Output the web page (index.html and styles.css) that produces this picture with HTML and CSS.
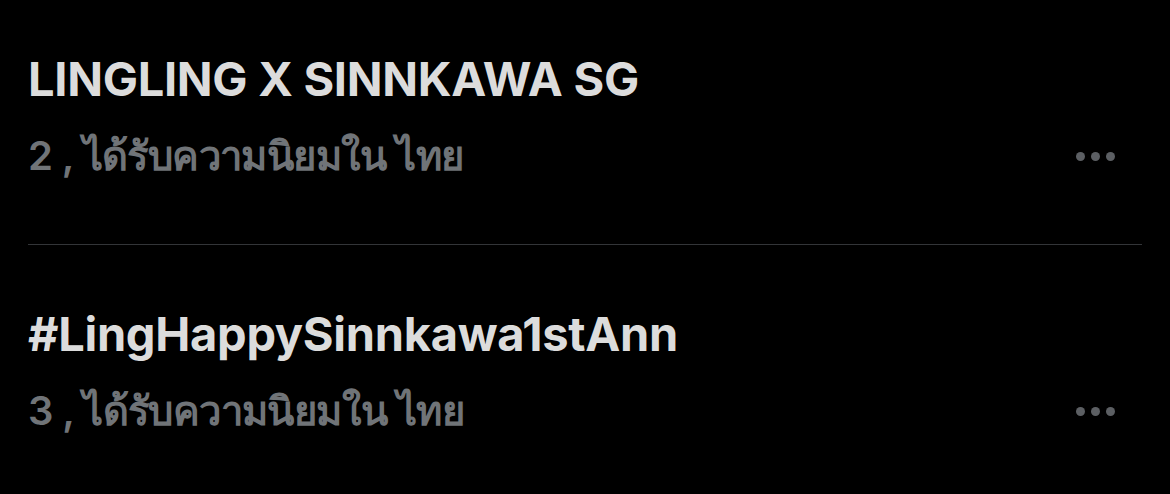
FILE: index.html
```html
<!DOCTYPE html>
<html lang="th">
<head>
    <meta charset="UTF-8">
    <meta name="viewport" content="width=device-width, initial-scale=1.0">
    <title>Trends</title>
    <link rel="stylesheet" href="styles.css">
</head>
<body>

    <!-- Trending list -->
    <div class="trend-list">
        <div class="trend">
            <div class="trend-name">LINGLING X SINNKAWA SG</div>
            <div class="trend-meta">
                <span>2 , ได้รับความนิยมใน ไทย</span>
                <div class="more"><span></span><span></span><span></span></div>
            </div>
        </div>
        <div class="divider"></div>
        <div class="trend">
            <div class="trend-name">#LingHappySinnkawa1stAnn</div>
            <div class="trend-meta">
                <span>3 , ได้รับความนิยมใน ไทย</span>
                <div class="more"><span></span><span></span><span></span></div>
            </div>
        </div>
    </div>

</body>
</html>
```

FILE: styles.css
```css
body {
    margin: 0;
    background-color: #000;
    font-family: Inter, "Noto Sans", sans-serif;
    color: #e7e9ea;
    width: 1170px;
    height: 494px;
    overflow: hidden;
}

.trend-list {
    padding: 51px 28px 0 28px;
}

.trend-name {
    font-size: 47px;
    font-weight: 700;
    line-height: 56px;
    color: #dcdcdc;
    letter-spacing: -0.3px;
}

.trend-meta {
    display: flex;
    align-items: center;
    justify-content: space-between;
    font-size: 40px;
    font-weight: 600;
    line-height: 50px;
    color: #707478;
    margin-top: 24px;
    letter-spacing: -0.6px;
}

/* three dot "more" button */
.more {
    display: flex;
    gap: 6px;
    margin-right: 27px;
}

.more span {
    width: 9px;
    height: 9px;
    border-radius: 50%;
    background-color: #5c5f63;
}

.divider {
    height: 1px;
    background-color: #333538;
    margin: 63px 0 61px 0;
}
```
